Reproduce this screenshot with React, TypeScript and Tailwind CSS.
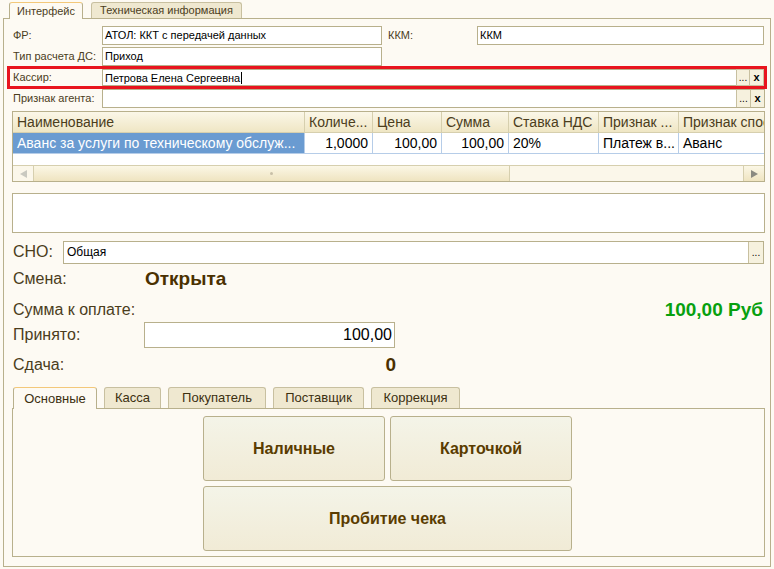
import React from "react";

const font = { fontFamily: '"Liberation Sans", Arial, sans-serif' };

function Field({ value, width, buttons = 0 }: { value: string; width: string; buttons?: number }) {
  return (
    <div className={`flex h-[19px] border border-[#b8b08c] bg-white ${width}`}>
      <div className="flex-1 truncate pl-[2px] text-[11px] leading-[17px] text-black">{value}</div>
      {buttons > 0 && (
        <div className="flex h-full w-[14px] items-center justify-center border-l border-[#c8c0a0] bg-[#f6f1de] text-[10px] leading-none text-black">
          ...
        </div>
      )}
      {buttons > 1 && (
        <div className="flex h-full w-[14px] items-center justify-center border-l border-[#c8c0a0] bg-[#f6f1de] text-[11px] font-bold leading-none text-black">
          x
        </div>
      )}
    </div>
  );
}

const cols = [
  { name: "Наименование", w: "w-[292px]", val: "Аванс за услуги по техническому обслуж...", right: false, sel: true },
  { name: "Количе...", w: "w-[68px]", val: "1,0000", right: true },
  { name: "Цена", w: "w-[69px]", val: "100,00", right: true },
  { name: "Сумма", w: "w-[67px]", val: "100,00", right: true },
  { name: "Ставка НДС", w: "w-[90px]", val: "20%", right: false },
  { name: "Признак ...", w: "w-[80px]", val: "Платеж в...", right: false },
  { name: "Признак способа", w: "flex-1", val: "Аванс", right: false },
];

export default function App() {
  return (
    <div className="h-[569px] w-[774px] overflow-hidden bg-[#fdfaf3] text-[#4b3d1c]" style={font}>
      {/* top tabs */}
      <div className="flex h-[18px] items-end gap-[8px] pl-[9px]">
        <div className="relative z-10 -mb-px flex h-[17px] w-[74px] items-center justify-center rounded-t-[3px] border border-b-0 border-[#b8b08c] border-t-[#f3c87a] bg-[#fdfaf3] text-[11px] text-[#4b3d1c]">
          Интерфейс
        </div>
        <div className="flex h-[16px] w-[151px] items-center justify-center rounded-t-[3px] border border-b-0 border-[#c8c0a0] bg-[#efe8d0] text-[11px] text-[#4b3d1c]">
          Техническая информация
        </div>
      </div>

      {/* main frame */}
      <div className="mx-[3px] h-[549px] border border-[#b8b08c] pt-[7px]">
        <div className="flex items-center pl-[9px] pr-[6px]">
          <div className="w-[89px] text-[11px]">ФР:</div>
          <Field value="АТОЛ: ККТ с передачей данных" width="w-[280px]" />
          <div className="ml-[6px] w-[89px] text-[11px]">ККМ:</div>
          <Field value="ККМ" width="flex-1" />
        </div>
        <div className="mt-[2px] flex items-center pl-[9px]">
          <div className="w-[89px] text-[11px]">Тип расчета ДС:</div>
          <Field value="Приход" width="w-[280px]" />
        </div>
        <div className="ml-[3px] mr-[3px] flex h-[23px] items-center border-[3px] border-[#e8141e] pl-[3px]">
          <div className="w-[89px] text-[11px]">Кассир:</div>
          <div className="flex h-[17px] flex-1 bg-white">
            <div className="flex-1 border-y border-l border-[#b8b08c] pl-[2px] text-[11px] leading-[15px] text-black">
              Петрова Елена Сергеевна<span className="ml-px inline-block h-[12px] w-px translate-y-[2px] bg-black" />
            </div>
            <div className="flex w-[14px] items-center justify-center border border-[#c8c0a0] bg-[#f6f1de] text-[10px] leading-none text-black">...</div>
            <div className="flex w-[14px] items-center justify-center border-y border-r border-[#c8c0a0] bg-[#f6f1de] text-[11px] font-bold leading-none text-black">x</div>
          </div>
        </div>
        <div className="flex items-center pl-[9px] pr-[5px]">
          <div className="w-[89px] text-[11px]">Признак агента:</div>
          <Field value="" width="flex-1" buttons={2} />
        </div>

        {/* table */}
        <div className="ml-[8px] mr-[5px] mt-[3px] h-[71px] border border-[#b8b08c] bg-white">
          <div className="flex h-[21px] border-b border-[#d6cfae] bg-gradient-to-b from-[#fbf7e8] to-[#efe6c4]">
            {cols.map((c, i) => (
              <div
                key={c.name}
                className={`${c.w} overflow-hidden whitespace-nowrap pl-[4px] text-[14px] leading-[20px] text-[#4b3d1c] ${i < cols.length - 1 ? "border-r border-[#d6cfae]" : ""}`}
              >
                {c.name}
              </div>
            ))}
          </div>
          <div className="flex h-[21px] border-b border-[#b6cde8]">
            {cols.map((c, i) => (
              <div
                key={c.name}
                className={`${c.w} overflow-hidden whitespace-nowrap px-[4px] text-[14px] leading-[20px] ${c.right ? "text-right" : ""} ${c.sel ? "bg-[#6a9bd1] text-white" : "text-black"} ${i < cols.length - 1 ? "border-r border-[#b6cde8]" : ""}`}
              >
                {c.val}
              </div>
            ))}
          </div>
          <div className="h-[11px]" />
          <div className="flex h-[16px] border-t border-[#d6cfae] bg-[#fbf7ea]">
            <div className="flex w-[21px] items-center justify-center border-r border-[#d6cfae]">
              <svg width="7" height="8" viewBox="0 0 7 8"><path d="M0 4 L7 0 L7 8 Z" fill="#c9c9c0" /></svg>
            </div>
            <div className="flex w-[476px] items-center justify-center border-r border-[#d6cfae] bg-gradient-to-b from-[#fbf7e6] to-[#efe4c0]">
              <span className="h-[3px] w-[3px] rounded-full bg-[#c8c0a8]" />
            </div>
            <div className="flex-1" />
            <div className="flex w-[21px] items-center justify-center border-l border-[#d6cfae] bg-gradient-to-b from-[#fbf7e6] to-[#efe4c0]">
              <svg width="7" height="8" viewBox="0 0 7 8"><path d="M7 4 L0 0 L0 8 Z" fill="#8a8a80" /></svg>
            </div>
          </div>
        </div>

        {/* memo */}
        <div className="ml-[8px] mr-[5px] mt-[11px] h-[40px] border border-[#b8b08c] bg-white" />

        {/* СНО */}
        <div className="mt-[7px] flex items-center pl-[9px] pr-[6px]">
          <div className="w-[50px] text-[16px]">СНО:</div>
          <div className="flex h-[23px] flex-1 border border-[#b8b08c] bg-white">
            <div className="flex-1 pl-[3px] text-[12px] leading-[21px] text-black">Общая</div>
            <div className="flex w-[15px] items-end justify-center border-l border-[#c8c0a0] bg-[#f6f1de] pb-[5px] text-[10px] leading-none text-black">...</div>
          </div>
        </div>

        <div className="mt-[3px] flex h-[24px] items-center pl-[9px]">
          <div className="w-[132px] text-[16px]">Смена:</div>
          <div className="text-[19px] font-bold text-[#4a3000]">Открыта</div>
        </div>
        <div className="mt-[7px] flex h-[24px] items-center justify-between pl-[9px] pr-[7px]">
          <div className="text-[16px]">Сумма к оплате:</div>
          <div className="text-[19px] font-bold text-[#07a00f]">100,00 Руб</div>
        </div>
        <div className="flex items-center pl-[9px]">
          <div className="w-[131px] text-[16px]">Принято:</div>
          <div className="h-[26px] w-[251px] border border-[#b8b08c] bg-white pr-[2px] text-right text-[16px] leading-[24px] text-black">
            100,00
          </div>
        </div>
        <div className="mt-[4px] flex h-[26px] w-[392px] items-center justify-between pl-[9px]">
          <div className="text-[16px]">Сдача:</div>
          <div className="text-[19px] font-bold text-[#4a3000]">0</div>
        </div>

        {/* inner tabs */}
        <div className="ml-[8px] mr-[5px] mt-[8px]">
          <div className="flex h-[22px] items-end gap-[7px] pl-px">
            <div className="relative z-10 -mb-px flex h-[22px] w-[84px] items-center justify-center rounded-t-[3px] border border-b-0 border-[#b8b08c] border-t-[#f3c87a] bg-[#fdfaf3] text-[13px] text-[#3c3010]">
              Основные
            </div>
            {[
              ["Касса", "w-[57px]"],
              ["Покупатель", "w-[98px]"],
              ["Поставщик", "w-[91px]"],
              ["Коррекция", "w-[89px]"],
            ].map(([t, w]) => (
              <div
                key={t}
                className={`flex h-[21px] ${w} items-center justify-center rounded-t-[3px] border border-b-0 border-[#c8c0a0] bg-[#efe8d0] text-[13px] text-[#3c3010]`}
              >
                {t}
              </div>
            ))}
          </div>
          <div className="h-[149px] border border-[#b8b08c] pl-[190px] pt-[7px]">
            <div className="flex gap-[5px]">
              <Btn w="w-[182px]">Наличные</Btn>
              <Btn w="w-[182px]">Карточкой</Btn>
            </div>
            <div className="mt-[5px] flex">
              <Btn w="w-[369px]">Пробитие чека</Btn>
            </div>
          </div>
        </div>
      </div>
    </div>
  );
}

function Btn({ w, children }: { w: string; children: React.ReactNode }) {
  return (
    <div
      className={`flex h-[65px] ${w} items-center justify-center rounded-[3px] border border-[#b8b08c] bg-gradient-to-b from-[#f4f4e8] to-[#f1ebd6] text-[16px] font-bold text-[#5a3c00]`}
    >
      {children}
    </div>
  );
}
